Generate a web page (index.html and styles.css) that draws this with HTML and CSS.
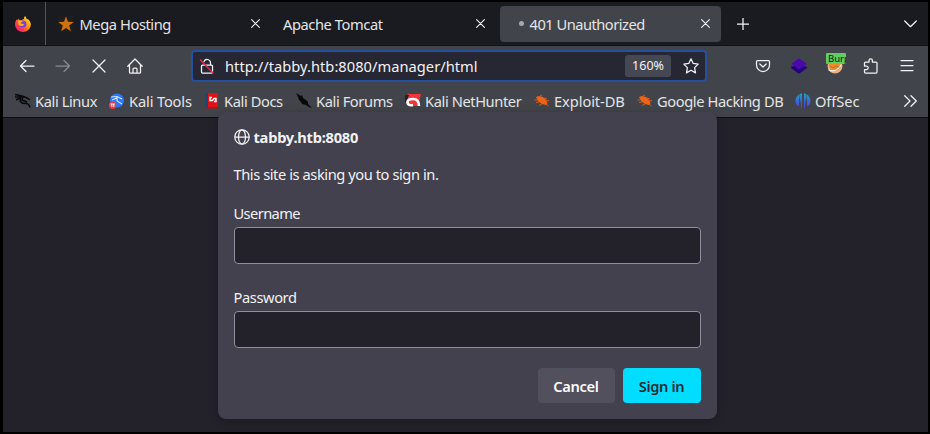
FILE: index.html
```html
<!DOCTYPE html>
<html lang="en">
<head>
<meta charset="utf-8">
<title>401 Unauthorized</title>
<link rel="stylesheet" href="styles.css">
</head>
<body>
<div class="window">
  <header class="tabs">
    <div class="view">
      <svg width="16" height="16" viewBox="0 0 16 16"><defs><linearGradient id="fx" x1="1" y1="0" x2="0" y2="1"><stop offset="0" stop-color="#fff14f"/><stop offset=".4" stop-color="#ff980e"/><stop offset=".7" stop-color="#ff3750"/><stop offset="1" stop-color="#e31587"/></linearGradient></defs><path fill="url(#fx)" d="M10 0c1 1 1.500 2 1.700 3L13 3.300C15 5 16 7 15.800 9 15.400 13 12 16 8 16S0 13 0 8.500C0 6 1 4 2.200 3v1.500L4 2.500v1.300l2 .4L9 3C8.900 2 9.200.8 10 0z"/><circle cx="7.800" cy="8" r="3.600" fill="#7540db"/><path fill="#ffad22" d="M3 4.500 8 5c-.2 1-2 1-2.200 2.200C7 8 8.500 7.400 9 8.400 8 10.500 5 10.500 3.500 8.500z"/></svg>
    </div>
    <div class="tab first">
      <svg class="fav" width="16" height="16" viewBox="0 0 16 16"><path fill="#1d1d1b" d="M0 0h16v16H0z"/><path fill="#cf720d" d="m8 .5 2 5.300 5.800.2-4.600 3.500 1.700 5.700L8 12l-4.900 3.200 1.700-5.700L.2 6 6 5.800z"/></svg>
      <span class="label">Mega Hosting</span>
      <svg class="close" width="9" height="9" viewBox="0 0 9 9"><path d="m.6.6 7.800 7.800m0-7.800L.6 8.400"/></svg>
    </div>
    <div class="tab second">
      <span class="label">Apache Tomcat</span>
      <svg class="close" width="9" height="9" viewBox="0 0 9 9"><path d="m.6.6 7.800 7.800m0-7.800L.6 8.400"/></svg>
    </div>
    <div class="tab active">
      <i class="dot"></i><span class="label">401 Unauthorized</span>
      <svg class="close" width="9" height="9" viewBox="0 0 9 9"><path d="m.6.6 7.800 7.800m0-7.800L.6 8.400"/></svg>
    </div>
    <svg class="plus" width="12" height="12" viewBox="0 0 12 12"><path d="M6 0v12M0 6h12"/></svg>
    <svg class="chevron" width="13" height="8" viewBox="0 0 13 8"><path d="m.7 1 5.800 5.700L12.300 1"/></svg>
  </header>

  <nav class="toolbar">
    <div class="navs">
      <svg width="16" height="16" viewBox="0 0 16 16"><path d="M15 8H1.500M7 2.500 1.500 8 7 13.500"/></svg>
      <svg class="off" width="16" height="16" viewBox="0 0 16 16"><path d="M1 8h13.500M9 2.500 14.500 8 9 13.500"/></svg>
      <svg width="16" height="16" viewBox="0 0 16 16"><path d="m2 2 12 12m0-12L2 14"/></svg>
      <svg width="16" height="16" viewBox="0 0 16 16"><path d="M.8 8.300 8 1l7.200 7.300M2.500 7v7.200q0 1 1 1h9q1 0 1-1V7M6 15v-4q0-1 1-1h2q1 0 1 1v4"/></svg>
    </div>
    <div class="url">
      <svg width="16" height="18" viewBox="0 0 16 18"><path d="M5 4.500a3.400 3.400 0 0 1 6.500 1V8M3.500 8h9q1 0 1 1v6q0 1-1 1h-9q-1 0-1-1V9q0-1 1-1z"/><path class="slash" d="m1.500 3 12.500 13"/></svg>
      <span class="address">http://tabby.htb:8080/manager/html</span>
      <span class="zoom">160%</span>
      <svg class="star" width="16" height="16" viewBox="0 0 16 16"><path d="m8 .8 2.200 4.600 5 .7-3.600 3.500.9 5.300L8 12.300l-4.500 2.600.9-5.300L.8 6.100l5-.7z"/></svg>
    </div>
    <div class="tools">
      <svg width="16" height="16" viewBox="0 0 16 16"><path d="M2.500 2.500h11q1 0 1 1V7a6.500 6.500 0 0 1-13 0V3.500q0-1 1-1zM4.800 6 8 9l3.200-3"/></svg>
      <svg width="16" height="16" viewBox="0 0 16 16"><path class="solid" d="m.3 8.500 3-.5L8 11l4.700-3 3 .5v1.800L8 15.700.3 10.300z"/><path class="solid" d="m8 .2 7.700 5.600L8 11.500.3 5.800z"/></svg>
      <div class="foxy">
        <svg width="16" height="16" viewBox="0 0 16 16"><circle cx="8" cy="8" r="7.500" fill="#e9b283"/><path class="solid" d="M2 5h12l-1 5-4 3-6-1z"/><path d="M2 12q7 3 12-5"/><path d="m3 8 3 2 3-2 3 1"/></svg>
        <span class="badge">Burp</span>
      </div>
      <svg width="16" height="16" viewBox="0 0 16 16"><path d="M1.500 6.500V5q0-1 1-1H6V2.500a1.700 1.700 0 0 1 3.400 0V4H13q1 0 1 1v9q0 1-1 1H2.500q-1 0-1-1v-2.500h2a1.700 1.700 0 0 0 0-3.400h-2z"/></svg>
      <svg width="16" height="16" viewBox="0 0 16 16"><path d="M2 2.500h12M2 7.500h12M2 12.500h12"/></svg>
    </div>
  </nav>

  <nav class="bookmarks">
    <a class="b1"><svg width="16" height="16" viewBox="0 0 16 16"><path fill="none" stroke="#08080a" stroke-width="1.500" d="M0 1.500 7 3l5 2 3 2M0 4l7-.5M1 7l5-3-1 4q2 3 6 2.500 3 0 4 4M8 4l-1 3 5 2"/></svg><span>Kali Linux</span></a>
    <a class="b2"><svg width="16" height="16" viewBox="0 0 16 16"><circle cx="8" cy="7.500" r="7" fill="#2777ff"/><path fill="none" stroke="#d4e5ff" stroke-width="1.200" d="m2 4 6-.5 5 2.500M3 7l5-2v3l5 3"/><circle cx="3.700" cy="12.300" r="3.700" fill="#e83e43"/><path fill="none" stroke="#fff" d="M1.500 11h4.500M2.800 11v3m2-3v3"/></svg><span>Kali Tools</span></a>
    <a class="b3"><svg width="16" height="16" viewBox="0 0 16 16"><path fill="#e01216" d="M3 0h11v14H3z"/><path fill="#174677" d="M1.500 0H4v15H1.500z"/><path fill="#b90e12" d="M2 14h12v1.500H2z"/><path fill="none" stroke="#fff" stroke-width="1.400" d="M8 4.500H6v3h2.500l1.500-2h2v3h-2"/></svg><span>Kali Docs</span></a>
    <a class="b4"><svg width="16" height="16" viewBox="0 0 16 16"><path fill="#08080a" d="m0 0 5 3 1-1 1 3 3 2 2 2v2l4 4-3-1-3-2-4-1-1-2-2-2-1-3z"/></svg><span>Kali Forums</span></a>
    <a class="b5"><svg width="16" height="16" viewBox="0 0 16 16"><path fill="#ef343a" d="M3 1h13l-3 12H4L0 9z"/><path fill="#24202b" d="M0 2h4L2 8l-2 2z"/><path fill="none" stroke="#fff" stroke-width="2.600" d="M14 13q0-7-6-7-6 0-5.500 3.500Q3 13 8 12"/></svg><span>Kali NetHunter</span></a>
    <a class="b6"><svg width="16" height="16" viewBox="0 0 16 16"><path fill="#f16314" d="m2 4 3-1 4 1 3 3 1.500 3-1.500 2-4-1-4-3z"/><path fill="none" stroke="#f16314" stroke-width=".8" d="m6 3 2-1M10 5l3 1M12 8l3-.5M12 11l2.500 2M8 11l-3 1.500M5 9 2 9.500M3 7 .5 7"/></svg><span>Exploit-DB</span></a>
    <a class="b7"><svg width="16" height="16" viewBox="0 0 16 16"><path fill="#f16314" d="m2 4 3-1 4 1 3 3 1.500 3-1.500 2-4-1-4-3z"/><path fill="none" stroke="#f16314" stroke-width=".8" d="m6 3 2-1M10 5l3 1M12 8l3-.5M12 11l2.500 2M8 11l-3 1.500M5 9 2 9.500M3 7 .5 7"/></svg><span>Google Hacking DB</span></a>
    <a class="b8"><svg width="16" height="16" viewBox="0 0 16 16"><defs><linearGradient id="os" x1="0" y1="0" x2="0" y2="1"><stop stop-color="#18a5c7"/><stop offset="1" stop-color="#5a32e0"/></linearGradient></defs><path fill="url(#os)" d="M4 1.500v12Q.5 12 .5 8T4 1.500zM4.500 1.200 7 .3v15.400L6 15q0-7-1.500-10zM9 .3l2.500.9V5Q10 8 10 15l-1 .7zM12 1.500q3.500 2.500 3.500 6.500T12 13.500z"/></svg><span>OffSec</span></a>
    <svg class="more" width="13" height="12" viewBox="0 0 13 12"><path d="m.7.7 5.300 5.300-5.300 5.300M7 .7 12.300 6 7 11.300"/></svg>
  </nav>

  <main class="page">
    <form class="dialog">
      <div class="host">
        <svg width="16" height="16" viewBox="0 0 16 16"><circle cx="8" cy="8" r="7.200"/><ellipse cx="8" cy="8" rx="3.500" ry="7.200"/><path d="M1 8h14"/></svg>
        <b>tabby.htb:8080</b>
      </div>
      <p class="message">This site is asking you to sign in.</p>
      <label class="user" for="user">Username</label>
      <input id="user" type="text">
      <label for="pass">Password</label>
      <input id="pass" type="password">
      <div class="actions">
        <button type="button" class="cancel">Cancel</button>
        <button type="button" class="signin">Sign in</button>
      </div>
    </form>
  </main>
</div>
</body>
</html>
```
FILE: styles.css
```css
* { box-sizing: border-box; }
body {
  margin: 0;
  background: #000;
  color: #f2f2f5;
  font: 14.67px/20px "Noto Sans", sans-serif;
}
svg { display: block; flex: none; }
.window {
  height: 434px;
  border: 2px solid #000;
  border-left-width: 3px;
  overflow: hidden;
  background: #23222b;
}
.tabs {
  display: flex;
  align-items: center;
  height: 44px;
  background: #1a1b20;
  border-bottom: 1px solid #101116;
  color: #e4e4e6;
}
.tabs svg path, .toolbar svg path, .host svg *, .more path { fill: none; stroke: #f2f2f5; stroke-width: 1.25; stroke-linecap: round; stroke-linejoin: round; }
.tabs .view path:nth-of-type(1) { fill: url(#fx); stroke: none; }
.tabs .view path:nth-of-type(2) { fill: #ffad22; stroke: none; }
.tabs .fav path { fill: #cf720d; stroke: none; }
.tabs .fav path:first-child { fill: #1d1d1b; }
.view {
  width: 43px;
  height: 43px;
  padding: 14px 0 0 12px;
  border-right: 1px solid #54555b;
}
.tab { display: flex; align-items: center; height: 36px; flex: none; }
.label { flex: 1; white-space: nowrap; padding-top: 1px; letter-spacing: -.42px; }
.tabs .close path { stroke-width: 1.1; }
.first { width: 227px; padding: 0 13px 0 12px; }
.first .fav { margin-right: 5.5px; }
.second { width: 227px; padding: 0 15px 0 10px; }
.active { width: 221px; padding: 0 11px 0 19px; border-radius: 4px; background: #42444b; }
.active .label { letter-spacing: -.5px; }
.dot { width: 5px; height: 5px; margin-right: 5.5px; border-radius: 50%; background: #a7a8ad; }
.plus { margin-left: 16px; }
.chevron { margin-left: auto; margin-right: 11px; }
.toolbar {
  display: flex;
  align-items: center;
  height: 40px;
  background: #42444b;
}
.navs { display: flex; gap: 20px; width: 188px; padding-left: 16px; }
.off { opacity: .4; }
.url {
  display: flex;
  align-items: center;
  width: 516px;
  height: 32px;
  padding: 0 6px;
  border: 2px solid #264f9e;
  border-radius: 4px;
  background: #262732;
}
.toolbar .url .slash { stroke: #e22850; stroke-width: 1.5; }
.address { flex: 1; margin-left: 10px; letter-spacing: .03px; }
.zoom {
  width: 46px;
  height: 22px;
  margin-right: 12px;
  border-radius: 3px;
  background: #454853;
  font-size: 12.5px;
  line-height: 22px;
  text-align: center;
}
.tools { display: flex; gap: 20px; margin-left: 48px; align-items: center; }
.toolbar svg .solid { stroke: none; }
.toolbar svg path.solid:nth-child(1) { fill: #20007b; }
.toolbar svg path.solid:nth-child(2) { fill: #4b08ad; }
.toolbar .foxy svg path.solid:nth-child(2) { fill: #f28b20; }
.toolbar .foxy svg path:nth-child(4) { stroke: #a8744b; stroke-width: 1; }
.foxy { position: relative; }
.badge {
  position: absolute;
  top: -5px;
  left: -1px;
  width: 20px;
  height: 11px;
  padding-left: 2px;
  overflow: hidden;
  border-radius: 1px;
  background: #60cc62;
  color: #0b230c;
  font-size: 9.5px;
  line-height: 11px;
}
.bookmarks {
  display: flex;
  align-items: center;
  height: 32px;
  padding: 0 0 1px 12px;
  background: #42444b;
  border-bottom: 1px solid #0d0d12;
  color: #e4e4e6;
}
.bookmarks a { display: flex; flex: none; align-items: center; gap: 4px; white-space: nowrap; letter-spacing: -.4px; }
.b1 { width: 94px; }
.b2 { width: 95px; }
.b3 { width: 92px; }
.b4 { width: 109px; }
.b5 { width: 129px; }
.b6 { width: 103px; }
.b7 { width: 158px; }
.bookmarks .b2 { letter-spacing: -.15px; }
.bookmarks .b6, .bookmarks .b8 { letter-spacing: -.08px; }
.more { margin-left: auto; margin-right: 11px; }
.page { display: flex; justify-content: center; align-items: flex-start; }
.dialog {
  position: relative;
  width: 499px;
  height: 307px;
  margin: -6px 0 0 3px;
  padding: 15px 16px 16px;
  border-radius: 8px;
  background: #42414d;
  box-shadow: 0 2px 10px #0004;
}
.host { display: flex; align-items: center; gap: 4px; height: 20px; letter-spacing: -.25px; }
.message { margin: 17px 0 19px; letter-spacing: -.43px; }
.dialog label { display: block; height: 20px; letter-spacing: -.4px; }
.dialog .user { letter-spacing: -.6px; }
.dialog input {
  display: block;
  width: 467px;
  height: 37px;
  margin: 4px 0 23px;
  border: 1px solid #8f8f9d;
  border-radius: 4px;
  background: #23222b;
}
.actions { display: flex; justify-content: flex-end; gap: 8px; margin-top: -3px; }
.actions button {
  height: 35px;
  padding: 0;
  border: 0;
  border-radius: 4px;
  font: 600 14.67px/20px "Noto Sans", sans-serif;
  letter-spacing: -.35px;
}
.cancel { width: 77px; background: #52505c; color: #fbfbfe; }
.signin { width: 78px; background: #00ddff; color: #2b2a33; }
```
